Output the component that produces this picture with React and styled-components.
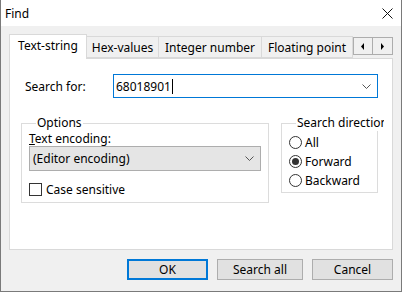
import React from "react";
import styled, { createGlobalStyle } from "styled-components";

const GlobalStyle = createGlobalStyle`
  html, body {
    margin: 0;
    padding: 0;
    background: #ffffff;
  }
  body {
    font-family: "Noto Sans", "Liberation Sans", sans-serif;
    font-size: 12px;
    color: #000;
  }
`;

const Window = styled.div`
  width: 402px;
  height: 292px;
  box-sizing: border-box;
  border: 1px solid #7a7a7a;
  border-top: 0;
  background: #f0f0f0;
  display: flex;
  flex-direction: column;
`;

const TitleBar = styled.div`
  height: 26px;
  background: #fff;
  display: flex;
  align-items: center;
  justify-content: space-between;
  padding: 0 8px 0 4px;
  font-size: 12px;
`;

const Body = styled.div`
  padding: 8px 8px 0 8px;
`;

const TabStrip = styled.div`
  display: flex;
  align-items: flex-end;
  height: 24px;
  position: relative;
  z-index: 1;
`;

const Tab = styled.div`
  width: ${(p) => p.w}px;
  box-sizing: border-box;
  height: ${(p) => (p.active ? 25 : 22)}px;
  border: 1px solid #d9d9d9;
  border-bottom: ${(p) => (p.active ? "0" : "1px solid #d9d9d9")};
  border-left: ${(p) => (p.first ? "1px solid #d9d9d9" : p.active ? "1px solid #d9d9d9" : "0")};
  background: ${(p) => (p.active ? "#fff" : "#f0f0f0")};
  display: flex;
  align-items: center;
  justify-content: center;
  padding-bottom: ${(p) => (p.active ? 3 : 0)}px;
  margin-bottom: ${(p) => (p.active ? -1 : 0)}px;
  white-space: nowrap;
`;

const ScrollArrows = styled.div`
  display: flex;
  align-self: flex-start;
  margin-top: 3px;
  margin-left: auto;
`;

const ArrowButton = styled.div`
  width: 20px;
  height: 18px;
  box-sizing: border-box;
  border: 1px solid #adadad;
  border-left: ${(p) => (p.first ? "1px solid #adadad" : "0")};
  background: #f0f0f0;
  display: flex;
  align-items: center;
  justify-content: center;
`;

const Panel = styled.div`
  background: #fff;
  border: 1px solid #d9d9d9;
  height: 192px;
  box-sizing: border-box;
  padding: 15px 13px 0 11px;
`;

const SearchRow = styled.div`
  display: flex;
  align-items: center;
  padding-left: 4px;
`;

const Label = styled.label`
  width: ${(p) => p.w || "auto"};
  flex: none;
`;

const ComboInput = styled.div`
  width: 265px;
  height: 24px;
  box-sizing: border-box;
  border: 1px solid #0078d7;
  display: flex;
  align-items: center;
  padding: 0 6px 0 2px;
  background: #fff;
`;

const InputText = styled.span`
  flex: 1;
  display: flex;
  align-items: center;
`;

const Caret = styled.span`
  display: inline-block;
  width: 1px;
  height: 15px;
  background: #000;
  margin-left: 1px;
`;

const GroupsRow = styled.div`
  display: flex;
  gap: 12px;
  margin-top: 17px;
  align-items: flex-start;
`;

const Group = styled.fieldset`
  margin: 0;
  width: ${(p) => p.w}px;
  box-sizing: border-box;
  border: 1px solid #dcdcdc;
  padding: ${(p) => p.pad};
  min-width: 0;
`;

const Legend = styled.legend`
  padding: 0 1px;
  margin-left: 7px;
  line-height: 16px;
  white-space: nowrap;
  overflow: hidden;
  max-width: 86px;
`;

const FieldLabel = styled.div`
  line-height: 15px;
`;

const Select = styled.div`
  height: 25px;
  box-sizing: border-box;
  border: 1px solid #adadad;
  background: #e5e5e5;
  display: flex;
  align-items: center;
  justify-content: space-between;
  padding: 0 6px 0 3px;
`;

const CheckRow = styled.label`
  display: flex;
  align-items: center;
  gap: 4px;
  margin-top: 11px;
  height: 14px;
`;

const CheckBox = styled.span`
  width: 13px;
  height: 13px;
  box-sizing: border-box;
  border: 1px solid #333;
  background: #fff;
`;

const RadioRow = styled.label`
  display: flex;
  align-items: center;
  gap: 3px;
  height: 19px;
`;

const Radio = styled.span`
  width: 13px;
  height: 13px;
  box-sizing: border-box;
  border: 1px solid #333;
  border-radius: 50%;
  background: #fff;
  display: flex;
  align-items: center;
  justify-content: center;
  &::after {
    content: "";
    width: 7px;
    height: 7px;
    border-radius: 50%;
    background: ${(p) => (p.checked ? "#333" : "transparent")};
  }
`;

const ButtonRow = styled.div`
  display: flex;
  justify-content: flex-end;
  gap: 9px;
  margin-top: 9px;
`;

const Button = styled.button`
  width: ${(p) => p.w}px;
  height: 21px;
  box-sizing: border-box;
  border: ${(p) => (p.primary ? "2px solid #0078d7" : "1px solid #adadad")};
  background: #e1e1e1;
  font-family: inherit;
  font-size: 12px;
  color: #000;
  padding: 0;
  display: flex;
  align-items: center;
  justify-content: center;
`;

const Chevron = () => (
  <svg width="9" height="5" viewBox="0 0 9 5">
    <path d="M0.5 0.5 L4.5 4.5 L8.5 0.5" fill="none" stroke="#555" strokeWidth="1" />
  </svg>
);

const tabs = [
  { name: "Text-string", w: 78 },
  { name: "Hex-values", w: 72 },
  { name: "Integer number", w: 103 },
  { name: "Floating point", w: 91 },
];

export default function App() {
  return (
    <>
      <GlobalStyle />
      <Window>
        <TitleBar>
          <span>Find</span>
          <svg width="11" height="11" viewBox="0 0 11 11">
            <path d="M0.5 0.5 L10.5 10.5 M10.5 0.5 L0.5 10.5" stroke="#111" strokeWidth="1" />
          </svg>
        </TitleBar>
        <Body>
          <TabStrip>
            {tabs.map((t, i) => (
              <Tab key={t.name} w={t.w} active={i === 0} first={i === 0}>
                {t.name}
              </Tab>
            ))}
            <ScrollArrows>
              <ArrowButton first>
                <svg width="4" height="7" viewBox="0 0 4 7">
                  <path d="M3 0 L0 3.5 L3 7 Z" fill="#000" />
                </svg>
              </ArrowButton>
              <ArrowButton>
                <svg width="4" height="7" viewBox="0 0 4 7">
                  <path d="M0 0 L3 3.5 L0 7 Z" fill="#000" />
                </svg>
              </ArrowButton>
            </ScrollArrows>
          </TabStrip>
          <Panel>
            <SearchRow>
              <Label w="88px">Search for:</Label>
              <ComboInput>
                <InputText>
                  68018901
                  <Caret />
                </InputText>
                <Chevron />
              </ComboInput>
            </SearchRow>
            <GroupsRow>
              <Group w={248} pad="0 7px 6px 7px">
                <Legend>Options</Legend>
                <FieldLabel>
                  <u>T</u>ext encoding:
                </FieldLabel>
                <Select>
                  <span>(Editor encoding)</span>
                  <Chevron />
                </Select>
                <CheckRow>
                  <CheckBox />
                  Case sensitive
                </CheckRow>
              </Group>
              <Group w={97} pad="2px 4px 2px 7px">
                <Legend>Search direction</Legend>
                <RadioRow>
                  <Radio />
                  All
                </RadioRow>
                <RadioRow>
                  <Radio checked />
                  Forward
                </RadioRow>
                <RadioRow>
                  <Radio />
                  Backward
                </RadioRow>
              </Group>
            </GroupsRow>
          </Panel>
          <ButtonRow>
            <Button w={81} primary>OK</Button>
            <Button w={86}>Search all</Button>
            <Button w={81}>Cancel</Button>
          </ButtonRow>
        </Body>
      </Window>
    </>
  );
}
